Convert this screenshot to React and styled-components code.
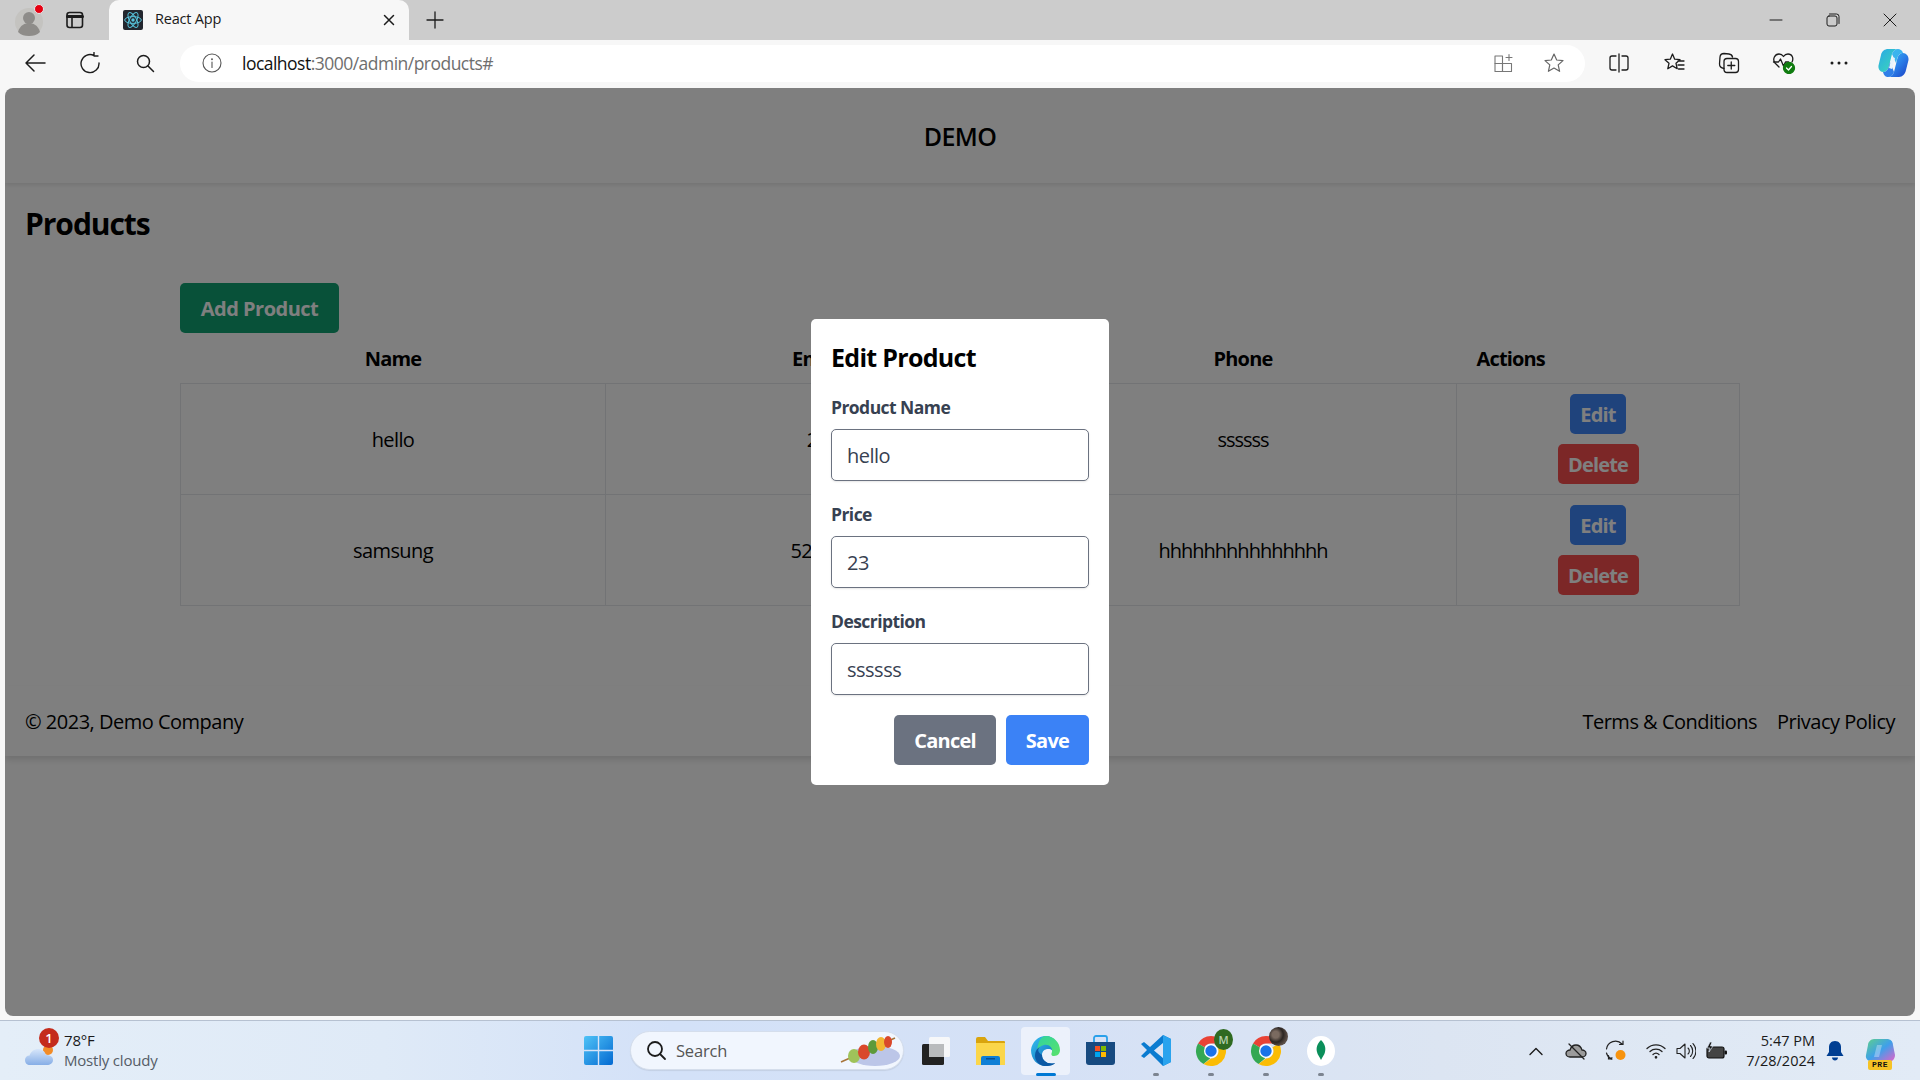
import React from "react";
import styled, { createGlobalStyle } from "styled-components";

const SANS = '"Open Sans", "Noto Sans", "Liberation Sans", sans-serif';

const Global = createGlobalStyle`
  html, body { margin: 0; padding: 0; width: 1920px; height: 1080px; overflow: hidden; }
  body { font-family: ${SANS}; background: #f7f7f7; }
  * { box-sizing: border-box; }
`;

const Desktop = styled.div`
  width: 1920px; height: 1080px; display: flex; flex-direction: column; background: #f7f7f7;
`;
const TitleBar = styled.div`
  height: 40px; background: #cccccc; display: flex; align-items: center; flex: none;
`;
const Slot = styled.div`
  width: ${p => p.$w || 55}px; height: 100%; display: flex; align-items: center; justify-content: center; flex: none; position: relative;
`;
const TitleLeft = styled.div`
  width: 109px; height: 100%; display: flex; align-items: center; padding-left: 9px; flex: none;
`;
const Tab = styled.div`
  width: 300px; height: 40px; background: #f7f7f7; border-radius: 10px 10px 0 0; display: flex; align-items: center;
  padding: 0 13px 0 14px; flex: none;
`;
const TabTitle = styled.span`
  font-size: 14.5px; line-height: 20px; letter-spacing: -0.2px; color: #1a1a1a; margin: 0 0 2px 12px; flex: 1;
`;
const WindowControls = styled.div`
  margin-left: auto; display: flex; height: 100%; padding-right: 1px;
`;
const Toolbar = styled.div`
  height: 48px; display: flex; align-items: center; padding-left: 7px; flex: none; background: #f7f7f7; padding-bottom: 2px;
`;
const Pill = styled.div`
  width: 1405px; height: 37px; margin: 0 6px 0 8px; background: #fff; border-radius: 19px; display: flex; align-items: center; padding-left: 22px; flex: none;
`;
const Url = styled.span`
  font-size: 17.5px; letter-spacing: -0.52px; color: #111; margin-left: 20px; flex: 1;
`;
const UrlMuted = styled.span` color: #6e6e6e; `;
const PageFrame = styled.div`
  height: 928px; margin: 0 5px; width: 1910px; background: #fff; border-radius: 8px; position: relative; overflow: hidden; flex: none;
`;
const SiteHeader = styled.header`
  height: 95px; display: flex; align-items: center; justify-content: center; box-shadow: 0 2px 4px rgba(0,0,0,.1);
  font-size: 25px; font-weight: 600; color: #000; letter-spacing: -0.6px; position: relative;
`;
const Main = styled.main`
  padding: 21px 175px 81px 0; height: 503px;
`;
const PageTitle = styled.h1`
  margin: 0 0 39px 20px; font-size: 30px; line-height: 40px; font-weight: 700; color: #000; letter-spacing: -1.05px;
`;
const TableWrap = styled.div` margin-left: 175px; `;
const AddButton = styled.button`
  display: block; height: 50px; width: 159px; padding: 2px 0 0; border: 0; border-radius: 5px; background: #10a372; color: #fff;
  font: 700 20px/30px ${SANS}; letter-spacing: -0.5px;
`;
const Table = styled.table`
  width: 1559px; table-layout: fixed; border-collapse: collapse; font-size: 20px; color: #000;
`;
const Th = styled.th`
  font-weight: 700; height: 50px; line-height: 30px; padding: 11px 10px 9px; letter-spacing: -0.85px;
  text-align: ${p => (p.$left ? "left" : "center")};
  padding-left: ${p => (p.$left ? 20 : 10)}px;
`;
const Td = styled.td`
  border: 1px solid #e5e7eb; height: 111px; text-align: center; padding: 12px 10px 10px; line-height: 30px; letter-spacing: ${p => p.$ls || -0.6}px;
`;
const ActionTd = styled(Td)` padding: 10px; `;
const Actions = styled.div`
  display: flex; flex-direction: column; align-items: center; gap: 10px;
`;
const RowButton = styled.button`
  height: 40px; padding: 2px 0 0; width: ${p => p.$w}px; border: 0; border-radius: 5px; color: #fff; background: ${p => p.$bg};
  font: 700 20px/30px ${SANS}; letter-spacing: -0.8px;
`;
const Footer = styled.footer`
  height: 70px; padding: 21px 20px 19px 20px; display: flex; justify-content: space-between; font-size: 20px; line-height: 30px; color: #000;
  box-shadow: 0 4px 6px rgba(0,0,0,.12); letter-spacing: -0.5px;
`;
const FooterLinks = styled.nav` display: flex; gap: 20px; `;
const Overlay = styled.div`
  position: absolute; inset: 0; background: rgba(0,0,0,.5); display: flex; align-items: center; justify-content: center;
`;
const Dialog = styled.form`
  width: 298px; height: 466px; background: #fff; border-radius: 5px; padding: 20px;
`;
const DialogTitle = styled.h2`
  margin: 0 0 20px; padding-top: 1px; height: 35px; font-size: 25px; line-height: 35px; font-weight: 700; color: #000; letter-spacing: -0.7px;
`;
const Field = styled.div` margin-bottom: 20px; `;
const Label = styled.label`
  display: block; height: 25px; padding-top: 1px; font-size: 17.5px; line-height: 25px; font-weight: 700; color: #374151; margin-bottom: 10px; letter-spacing: -0.55px;
`;
const Input = styled.input`
  display: block; width: 100%; height: 52px; padding: 10px 15px; border: 1px solid #6b7280; border-radius: 5px; background: #fff;
  font: 400 20px/30px ${SANS}; color: #374151; box-shadow: 0 1px 2px rgba(0,0,0,.1); letter-spacing: -0.5px; outline: none;
`;
const DialogActions = styled.div` display: flex; justify-content: flex-end; gap: 10px; `;
const DialogButton = styled.button`
  height: 50px; width: ${p => p.$w}px; padding: 2px 0 0; border: 0; border-radius: 5px; color: #fff; background: ${p => p.$bg};
  font: 700 20px/30px ${SANS}; letter-spacing: -0.75px;
`;

const Gap = styled.div` height: 4px; flex: none; `;
const Taskbar = styled.div`
  height: 60px; flex: none; display: flex; align-items: center; border-top: 1px solid #b6c1d1;
  background: linear-gradient(90deg, #e4eef8 0%, #dfeaf7 20%, #d3e1f8 35%, #d5e1f6 55%, #dce5f2 75%, #e2ebf6 100%);
`;
const Weather = styled.div`
  width: 571px; height: 100%; display: flex; align-items: center; padding-left: 24px; flex: none; position: relative;
`;
const WeatherText = styled.div`
  margin: 0 0 2px 8px; font-size: 15px; line-height: 20px; color: #1a1a1a; letter-spacing: -0.2px;
`;
const WeatherSub = styled.div` color: #555c66; `;
const Badge = styled.span`
  position: absolute; left: 39px; top: 7px; width: 20px; height: 20px; border-radius: 50%; background: #c42b1c; color: #fff;
  font-size: 13px; font-weight: 600; line-height: 20px; text-align: center;
`;
const SearchBox = styled.div`
  width: 274px; height: 39px; margin: 0 4px 0 4px; border-radius: 20px; background: #f1f6fe; border: 1px solid #d5deec; display: flex; align-items: center; padding-left: 15px; flex: none;
  box-shadow: 0 1px 1px rgba(0,0,0,.08);
`;
const SearchLabel = styled.span`
  font-size: 16.5px; color: #555; margin-left: 9px; flex: 1; letter-spacing: -0.2px;
`;
const TaskSlot = styled.div`
  width: 55px; height: 48px; display: flex; align-items: center; justify-content: center; flex: none; position: relative;
  &::before {
    content: ""; display: ${p => (p.$active ? "block" : "none")}; position: absolute; inset: 0 3px; border-radius: 4px; background: rgba(255,255,255,.55);
  }
  & > * { position: relative; }
  & > span { position: absolute; }
  &::after {
    content: ""; display: ${p => (p.$dot ? "block" : "none")}; position: absolute; bottom: -1px; left: 50%; height: 3px; border-radius: 2px;
    width: ${p => (p.$active ? 20 : 6)}px; transform: translateX(-50%); background: ${p => (p.$active ? "#0078d4" : "#7c8490")};
  }
`;
const Tray = styled.div`
  margin-left: auto; height: 100%; display: flex; align-items: center; padding-right: 15px;
`;
const TraySlot = styled.div`
  width: ${p => p.$w || 40}px; display: flex; justify-content: center; align-items: center; flex: none; position: relative;
`;
const Clock = styled.div`
  width: 84px; text-align: right; font-size: 14.5px; line-height: 20px; color: #1a1a1a; letter-spacing: 0; flex: none; white-space: nowrap;
`;
const PreTag = styled.span`
  position: absolute; left: 13px; bottom: -6px; width: 24px; height: 10px; background: #f6c325; border-radius: 2px;
  font: 700 8px/10px "Liberation Mono", monospace; text-align: center; color: #111; letter-spacing: .6px;
`;

const S = ({ w = 20, h = 20, vb = "0 0 20 20", c = "none", stroke = "#1c1c1c", sw = 1.4, children }) => (
  <svg width={w} height={h} viewBox={vb} fill={c} stroke={stroke} strokeWidth={sw} strokeLinecap="round" strokeLinejoin="round">{children}</svg>
);

const Profile = () => (
  <Slot $w={44}>
    <svg width="34" height="34" viewBox="0 0 34 34">
      <circle cx="15" cy="19" r="14" fill="#c4c3c0" />
      <circle cx="15" cy="15" r="6" fill="#8e8c89" />
      <path d="M4 29c2-7 7-9 11-9s9 2 11 9c-3 3-7 4-11 4s-8-1-11-4z" fill="#8e8c89" />
      <circle cx="25" cy="6" r="4.5" fill="#e60012" stroke="#e8e8e8" strokeWidth="1" />
    </svg>
  </Slot>
);
const ReactFav = () => (
  <svg width="20" height="20" viewBox="0 0 20 20" style={{ flex: "none" }}>
    <rect width="20" height="20" rx="2" fill="#23272f" />
    <g fill="none" stroke="#58c4dc" strokeWidth="1">
      <ellipse cx="10" cy="10" rx="8.3" ry="3.4" />
      <ellipse cx="10" cy="10" rx="8.3" ry="3.4" transform="rotate(60 10 10)" />
      <ellipse cx="10" cy="10" rx="8.3" ry="3.4" transform="rotate(120 10 10)" />
    </g>
    <circle cx="10" cy="10" r="1.7" fill="#58c4dc" />
  </svg>
);
const Copilot = () => (
  <svg width="31" height="28" viewBox="0 0 31 28">
    <defs>
      <linearGradient id="cpA" x1="0" y1="0" x2="1" y2="1"><stop offset="0" stopColor="#2aa8e6" /><stop offset=".6" stopColor="#35c8c8" /><stop offset="1" stopColor="#62e0a0" /></linearGradient>
      <linearGradient id="cpB" x1="0" y1="0" x2="1" y2="1"><stop offset="0" stopColor="#38b8f0" /><stop offset=".5" stopColor="#2a7fe8" /><stop offset="1" stopColor="#1b3fc4" /></linearGradient>
    </defs>
    <path d="M10 0h10c-3 0-5 2-6 5l-3 12c-1 4-3 6-6 6-3 0-5-3-4.500-6.500L3 6c.8-4 4-6 7-6z" fill="url(#cpA)" />
    <path d="M21 28H10c3 0 5-2 6-5l3-12c1-5 3-7 6-7s6 3 5.500 7L28 21c-.8 4-3.500 7-7 7z" fill="url(#cpB)" />
    <path d="M20 0c2 0 4 1 5 4-3 0-5 2-6 6l-1 4-4-9c1-3 3-5 6-5z" fill="#3bb4ee" />
    <path d="M10 28c-2 0-4-1-5-5 3 0 5-2 6-6l1-4 4 10c-1 3-3 5-6 5z" fill="#2f7fe8" />
    <path d="M14 8l3 1-3 11-3-1z" fill="#e8f4fc" />
  </svg>
);
const Edge = () => (
  <svg width="30" height="32" viewBox="0 0 30 32">
    <defs>
      <linearGradient id="edA" x1="0" y1="0" x2="1" y2="1"><stop offset="0" stopColor="#35c1f1" /><stop offset="1" stopColor="#0a5fb0" /></linearGradient>
      <linearGradient id="edB" x1="0" y1="0" x2="1" y2="1"><stop offset="0" stopColor="#2fd3a0" /><stop offset="1" stopColor="#5be26a" /></linearGradient>
    </defs>
    <path d="M15 1C7 1 1 7 0 15c0 9 6 16 15 16 4 0 7-1 9-3-7 2-13-2-13-8 0-4 3-6 6-6 4 0 5 2 5 4h6c1-9-5-17-13-17z" fill="url(#edA)" />
    <path d="M15 1c8 0 14 7 14 14 0 3-2 6-6 6-3 0-3-2-2-4 1-4-3-8-8-7-3 .6-6 3-7 6C7 8 9 1 15 1z" fill="url(#edB)" />
    <path d="M11 20c0 6 6 10 13 8-1 2-5 3-9 3-4 0-8-2-10-6-2-4-1-11 4-13-3 3-2 5 2 8z" fill="#0c59a4" />
  </svg>
);
const Chrome = ({ badge }) => (
  <>
    <svg width="32" height="32" viewBox="-16 -16 32 32">
      <path d="M0-15A15 15 0 0 1 13 -7.500L0 -7.500A7.500 7.500 0 0 0 -6.500 -3.750L-13 -7.500A15 15 0 0 1 0-15z" fill="#e94235" />
      <path d="M-13-7.500A15 15 0 0 0 -7.500 13L-1 7.500L-6.500 -3.750z" fill="#34a853" />
      <path d="M13-7.500A15 15 0 0 1 -7.500 13L0 7.500A7.500 7.500 0 0 0 6.500 -3.750z" fill="#fbbc04" />
      <circle r="7" fill="#fff" /><circle r="5.700" fill="#1a73e8" />
    </svg>
    {badge}
  </>
);
const MBadge = styled.span`
  position: absolute; left: 31px; top: 2px; width: 19px; height: 21px; border-radius: 50%; background: #2f6a21; color: #b7d0ae;
  font-size: 11px; line-height: 21px; text-align: center; font-weight: 600;
`;
const PhotoBadge = styled.span`
  position: absolute; left: 31px; top: 0; width: 19px; height: 19px; border-radius: 50%;
  background: radial-gradient(circle at 35% 40%, #7a6a60 0 20%, #2c2623 45%, #5d5049 70%, #252120 100%);
`;

const TopLeftIcons = () => (
  <TitleLeft>
    <Profile />
    <Slot $w={44}>
      <S w="18" h="18" vb="0 0 18 18" sw="1.6">
        <rect x="1" y="1.500" width="15.500" height="15" rx="2.500" />
        <path d="M1.500 5.500h15" strokeWidth="3" />
        <path d="M6 6v10" />
      </S>
    </Slot>
  </TitleLeft>
);

export default function App() {
  return (
    <Desktop>
      <Global />
      <TitleBar>
        <TopLeftIcons />
        <Tab>
          <ReactFav />
          <TabTitle>React App</TabTitle>
          <S w="14" h="14" vb="0 0 14 14" sw="1.5"><path d="M2.500 2.500l9 9M11.500 2.500l-9 9" /></S>
        </Tab>
        <Slot $w={52}>
          <S w="18" h="18" vb="0 0 18 18" sw="1.3"><path d="M9 1v16M1 9h16" /></S>
        </Slot>
        <WindowControls>
          <Slot $w={57}><S w="14" h="14" vb="0 0 14 14" sw="1"><path d="M1 7h12" /></S></Slot>
          <Slot $w={57}>
            <S w="14" h="14" vb="0 0 14 14" sw="1"><rect x="1" y="3" width="10" height="10" rx="2" /><path d="M3.500 1h7a2.500 2.500 0 0 1 2.500 2.500v7" /></S>
          </Slot>
          <Slot $w={58}><S w="14" h="14" vb="0 0 14 14" sw="1"><path d="M1 1l12 12M13 1L1 13" /></S></Slot>
        </WindowControls>
      </TitleBar>

      <Toolbar>
        <Slot>
          <S w="22" h="22" vb="0 0 22 22" sw="1.500"><path d="M21 11H2M10 3l-8 8 8 8" /></S>
        </Slot>
        <Slot>
          <S w="22" h="22" vb="0 0 22 22" sw="1.400"><path d="M15 3.500A9 9 0 1 0 20 11M15 .5v3.500h4" /></S>
        </Slot>
        <Slot>
          <S w="20" h="20" vb="0 0 20 20" sw="1.500"><circle cx="8.500" cy="8.500" r="6" /><path d="M13 13l5.500 5.500" /></S>
        </Slot>
        <Pill>
          <S w="20" h="20" vb="0 0 20 20" stroke="#555" sw="1.100"><circle cx="10" cy="10" r="9" /><path d="M10 9v5.500" /><circle cx="10" cy="6.200" r=".4" /></S>
          <Url>localhost<UrlMuted>:3000/admin/products#</UrlMuted></Url>
          <Slot $w={50}>
            <S w="20" h="20" vb="0 0 20 20" stroke="#777" sw="1.100"><rect x="1" y="3" width="7.500" height="7.500" /><rect x="1" y="10.500" width="7.500" height="8" /><rect x="8.500" y="10.500" width="9" height="8" /><path d="M15 1.500v6M12 4.500h6" /></S>
          </Slot>
          <Slot $w={50} style={{ marginRight: 6 }}>
            <S w="22" h="22" vb="0 0 22 22" stroke="#666" sw="1.200"><path d="M11 2l2.700 6 6.300.6-4.800 4.300 1.400 6.400L11 16l-5.600 3.300 1.400-6.400L2 8.600 8.300 8z" /></S>
          </Slot>
        </Pill>
        <Slot>
          <S w="20" h="20" vb="0 0 20 20" sw="1.300"><path d="M10 1v18M7 3H3a2 2 0 0 0-2 2v10a2 2 0 0 0 2 2h4M13 3h4a2 2 0 0 1 2 2v10a2 2 0 0 1-2 2h-4" /></S>
        </Slot>
        <Slot>
          <S w="22" h="22" vb="0 0 22 22" sw="1.300"><path d="M9.500 2l2.200 5.200 5.300.5-4 3.600 1.200 5.400-4.700-2.800-4.700 2.800 1.200-5.400-4-3.600 5.300-.5zM15 9h6M15 13h6M15.500 17h5.500" /></S>
        </Slot>
        <Slot>
          <S w="22" h="22" vb="0 0 22 22" sw="1.300"><path d="M6 16.500C3 16 1.500 14 1.500 12L2 5c.2-2 2-3.500 4-3.500L11 2c1.500.2 3 1 3.500 3" /><rect x="6" y="6.500" width="14.500" height="14" rx="3" /><path d="M13.250 10v7M9.800 13.500h7" /></S>
        </Slot>
        <Slot>
          <svg width="24" height="22" viewBox="0 0 24 22" fill="none" stroke="#1c1c1c" strokeWidth="1.300" strokeLinejoin="round" strokeLinecap="round">
            <path d="M7 15L3 11C0 7 3 2 7 2c2 0 3.500 1 4.500 2.500C12.500 3 14 2 16 2c4 0 6 4 4 8" />
            <path d="M1.500 10h5l2-3 3 7 2-4h3" />
            <circle cx="17" cy="16" r="5.500" fill="#107c10" stroke="#107c10" />
            <path d="M14.500 16l2 2 3-3.500" stroke="#fff" />
          </svg>
        </Slot>
        <Slot>
          <svg width="18" height="4" viewBox="0 0 18 4" fill="#1c1c1c"><circle cx="2" cy="2" r="1.500" /><circle cx="9" cy="2" r="1.500" /><circle cx="16" cy="2" r="1.500" /></svg>
        </Slot>
        <Slot><Copilot /></Slot>
      </Toolbar>

      <PageFrame>
        <SiteHeader>DEMO</SiteHeader>
        <Main>
          <PageTitle>Products</PageTitle>
          <TableWrap>
            <AddButton type="button">Add Product</AddButton>
            <Table>
              <colgroup>
                <col width="425" /><col width="424" /><col width="427" /><col width="283" />
              </colgroup>
              <thead>
                <tr><Th>Name</Th><Th>Email</Th><Th>Phone</Th><Th $left>Actions</Th></tr>
              </thead>
              <tbody>
                {[["hello", "23", "ssssss"], ["samsung", "52000", "hhhhhhhhhhhhhhh"]].map(r => (
                  <tr key={r[0]}>
                    <Td>{r[0]}</Td><Td>{r[1]}</Td><Td $ls={-1}>{r[2]}</Td>
                    <ActionTd>
                      <Actions>
                        <RowButton $bg="#3f86f8" $w={56}>Edit</RowButton>
                        <RowButton $bg="#f94f4f" $w={81}>Delete</RowButton>
                      </Actions>
                    </ActionTd>
                  </tr>
                ))}
              </tbody>
            </Table>
          </TableWrap>
        </Main>
        <Footer>
          <span>© 2023, Demo Company</span>
          <FooterLinks><span>Terms &amp; Conditions</span><span>Privacy Policy</span></FooterLinks>
        </Footer>
        <Overlay>
          <Dialog>
            <DialogTitle>Edit Product</DialogTitle>
            <Field><Label>Product Name</Label><Input readOnly value="hello" /></Field>
            <Field><Label>Price</Label><Input readOnly value="23" /></Field>
            <Field><Label>Description</Label><Input readOnly value="ssssss" /></Field>
            <DialogActions>
              <DialogButton type="button" $bg="#6b7280" $w={102}>Cancel</DialogButton>
              <DialogButton type="button" $bg="#3b82f6" $w={83}>Save</DialogButton>
            </DialogActions>
          </Dialog>
        </Overlay>
      </PageFrame>
      <Gap />

      <Taskbar>
        <Weather>
          <svg width="32" height="26" viewBox="0 0 32 26" style={{ marginTop: 6 }}>
            <defs><linearGradient id="cloud" x1="0" y1="0" x2="0" y2="1"><stop offset="0" stopColor="#d7e6fa" /><stop offset="1" stopColor="#86aee6" /></linearGradient></defs>
            <circle cx="24" cy="9" r="5" fill="#f28c28" />
            <path d="M6 24c-3 0-5-2-5-5 0-2.500 2-4.500 4.500-4.500C7 10.500 10 8 14 8c4 0 7 2.500 8 6 4 0 7 1.500 7 5s-3 5-6 5z" fill="url(#cloud)" />
          </svg>
          <Badge>1</Badge>
          <WeatherText>78°F<WeatherSub>Mostly cloudy</WeatherSub></WeatherText>
        </Weather>
        <TaskSlot>
          <svg width="29" height="29" viewBox="0 0 29 29">
            <defs><linearGradient id="win" x1="0" y1="0" x2="1" y2="1"><stop offset="0" stopColor="#4fc3f7" /><stop offset="1" stopColor="#0369d1" /></linearGradient></defs>
            <path d="M0 2a2 2 0 0 1 2-2h11.800v13.800H0zM15.200 0H27a2 2 0 0 1 2 2v11.800H15.200zM0 15.200h13.800V29H2a2 2 0 0 1-2-2zM15.200 15.200H29V27a2 2 0 0 1-2 2H15.200z" fill="url(#win)" />
          </svg>
        </TaskSlot>
        <SearchBox>
          <S w="21" h="21" vb="0 0 21 21" sw="1.800"><circle cx="9" cy="9" r="7" /><path d="M14 14l5 5" /></S>
          <SearchLabel>Search</SearchLabel>
          <svg width="62" height="34" viewBox="0 0 62 34" style={{ marginRight: 2 }}>
            <ellipse cx="36" cy="22" rx="25" ry="10" fill="#bcc6e8" />
            <path d="M2 28L56 4" stroke="#a8753a" strokeWidth="1.500" />
            <ellipse cx="15" cy="22" rx="6" ry="7" fill="#9fc35a" />
            <ellipse cx="25" cy="18" rx="6" ry="7.500" fill="#d9482b" />
            <ellipse cx="34" cy="13" rx="5" ry="7" fill="#5d9a3a" />
            <ellipse cx="42" cy="10" rx="5" ry="7" fill="#f2b632" />
            <ellipse cx="49" cy="8" rx="4" ry="6" fill="#d9482b" />
          </svg>
        </SearchBox>
        <TaskSlot>
          <svg width="30" height="30" viewBox="0 0 30 30">
            <rect x="8" y="1" width="21" height="20" rx="1.500" fill="#f6f7f9" />
            <rect x="1" y="8" width="22" height="21" rx="1.500" fill="#222" />
            <rect x="8" y="8" width="15" height="13" fill="#b9bbbd" />
          </svg>
        </TaskSlot>
        <TaskSlot>
          <svg width="31" height="28" viewBox="0 0 31 28">
            <path d="M1 2a2 2 0 0 1 2-2h7l3 4h16a1 1 0 0 1 1 1v3H1z" fill="#d9a40e" />
            <rect x="1" y="6" width="29" height="22" fill="#fbd64a" />
            <path d="M6 28v-7a2 2 0 0 1 2-2h15a2 2 0 0 1 2 2v7z" fill="#0f7fd6" />
            <rect x="11" y="21" width="9" height="1.500" fill="#0a4f8f" />
          </svg>
        </TaskSlot>
        <TaskSlot $active $dot><Edge /></TaskSlot>
        <TaskSlot>
          <svg width="29" height="31" viewBox="0 0 29 31">
            <path d="M8 7V3a2 2 0 0 1 2-2h9a2 2 0 0 1 2 2v4" fill="none" stroke="#29a0ea" strokeWidth="1.800" />
            <path d="M0 7h29v20a3 3 0 0 1-3 3H3a3 3 0 0 1-3-3z" fill="#174a80" />
            <rect x="9" y="11" width="5" height="5" fill="#f25022" /><rect x="15" y="11" width="5" height="5" fill="#7fba00" />
            <rect x="9" y="17" width="5" height="5" fill="#00a4ef" /><rect x="15" y="17" width="5" height="5" fill="#ffb900" />
          </svg>
        </TaskSlot>
        <TaskSlot $dot>
          <svg width="30" height="31" viewBox="0 0 30 31">
            <path d="M22 0l8 4v23l-8 4-13-13-6 5-3-2 6-6-6-6 3-2 6 5z" fill="#0a7bd0" />
            <path d="M22 0l8 4v23l-8 4zM22 8l-9 7.500 9 7.500z" fill="#29a3ee" />
            <path d="M22 8l-9 7.500 9 7.500z" fill="#dbe4f6" />
          </svg>
        </TaskSlot>
        <TaskSlot $dot><Chrome badge={<MBadge>M</MBadge>} /></TaskSlot>
        <TaskSlot $dot><Chrome badge={<PhotoBadge />} /></TaskSlot>
        <TaskSlot $dot>
          <svg width="28" height="30" viewBox="0 0 28 30">
            <ellipse cx="14" cy="15" rx="14" ry="15" fill="#fff" />
            <path d="M14 4c4 4 5 8 4 12-.5 2.500-2.500 5-4 8-1.500-3-3.500-5.500-4-8-1-4 0-8 4-12z" fill="#0b8f5a" />
          </svg>
        </TaskSlot>
        <Tray>
          <TraySlot $w={50}>
            <S w="16" h="10" vb="0 0 16 10" sw="1.400"><path d="M2 8.500l6-6 6 6" /></S>
          </TraySlot>
          <TraySlot $w={30}>
            <svg width="22" height="18" viewBox="0 0 22 18" stroke="#222" strokeWidth="1.300" fill="#9b9b9b" strokeLinecap="round">
              <path d="M5 15c-2 0-4-1.500-4-3.500S3 8 5 8c1-3 3-5 6-5s5 2 6 5c2 0 4 1.500 4 3.500S19 15 17 15z" />
              <path d="M4 2l15 15" />
            </svg>
          </TraySlot>
          <TraySlot $w={50}>
            <svg width="22" height="22" viewBox="0 0 22 22" fill="none" stroke="#222" strokeWidth="1.200" strokeLinecap="round">
              <path d="M1.500 9A9 9 0 0 1 17 4M18 1v3.500h-3.500M4 19l3-1.200M3.500 15.500v3.500H7" />
              <path d="M1.500 13a9 9 0 0 0 5 6" />
              <circle cx="15.500" cy="15" r="5" fill="#f7930e" stroke="none" />
            </svg>
          </TraySlot>
          <TraySlot $w={30}>
            <svg width="20" height="16" viewBox="0 0 20 16" fill="none" stroke="#222" strokeWidth="1.300" strokeLinecap="round">
              <path d="M1 5.500a13 13 0 0 1 18 0M4 8.500a9 9 0 0 1 12 0M7 11.500a4.500 4.500 0 0 1 6 0" />
              <circle cx="10" cy="14.300" r=".7" fill="#222" />
            </svg>
          </TraySlot>
          <TraySlot $w={30}>
            <svg width="20" height="18" viewBox="0 0 20 18" fill="none" stroke="#222" strokeWidth="1.100" strokeLinecap="round" strokeLinejoin="round">
              <path d="M1 6.500v5h3l5 4.500V2L4 6.500z" />
              <path d="M12 6a4 4 0 0 1 0 6M14.500 3.500a8 8 0 0 1 0 11M17 1.500a11 11 0 0 1 0 15" />
            </svg>
          </TraySlot>
          <TraySlot $w={30}>
            <svg width="21" height="18" viewBox="0 0 21 18">
              <rect x="1" y="5" width="17" height="11" rx="2" fill="#444" stroke="#111" strokeWidth="1.200" />
              <rect x="18.500" y="8.500" width="2.500" height="4" rx="1" fill="#111" />
              <path d="M4 0L1 6h3L3 10l4-6H4.500L6 0z" fill="#111" stroke="#e0eaf6" strokeWidth=".7" />
            </svg>
          </TraySlot>
          <Clock>5:47 PM<br />7/28/2024</Clock>
          <TraySlot $w={40}>
            <svg width="18" height="20" viewBox="0 0 18 20" fill="#003e92">
              <path d="M9 0c4 0 6 3 6 6v5l2.500 4H.5L3 11V6c0-3 2-6 6-6z" /><path d="M6 16.500h6c0 2-1.500 3-3 3s-3-1-3-3z" />
            </svg>
          </TraySlot>
          <TraySlot $w={50}>
            <svg width="30" height="26" viewBox="0 0 30 26">
              <defs><linearGradient id="pre" x1="0" y1="0" x2="1" y2="1"><stop offset="0" stopColor="#5fd08a" /><stop offset=".5" stopColor="#3fa0ea" /><stop offset="1" stopColor="#e860c8" /></linearGradient></defs>
              <path d="M9 1h13c3 0 6 2 6 6l2 10c0 4-3 7-6 7H8c-4 0-8-3-7-7L3 7c0-3 3-6 6-6z" fill="url(#pre)" />
              <path d="M12 7h5l-3 12H9z" fill="#f0f4ff" opacity=".35" />
            </svg>
            <PreTag>PRE</PreTag>
          </TraySlot>
        </Tray>
      </Taskbar>
    </Desktop>
  );
}
